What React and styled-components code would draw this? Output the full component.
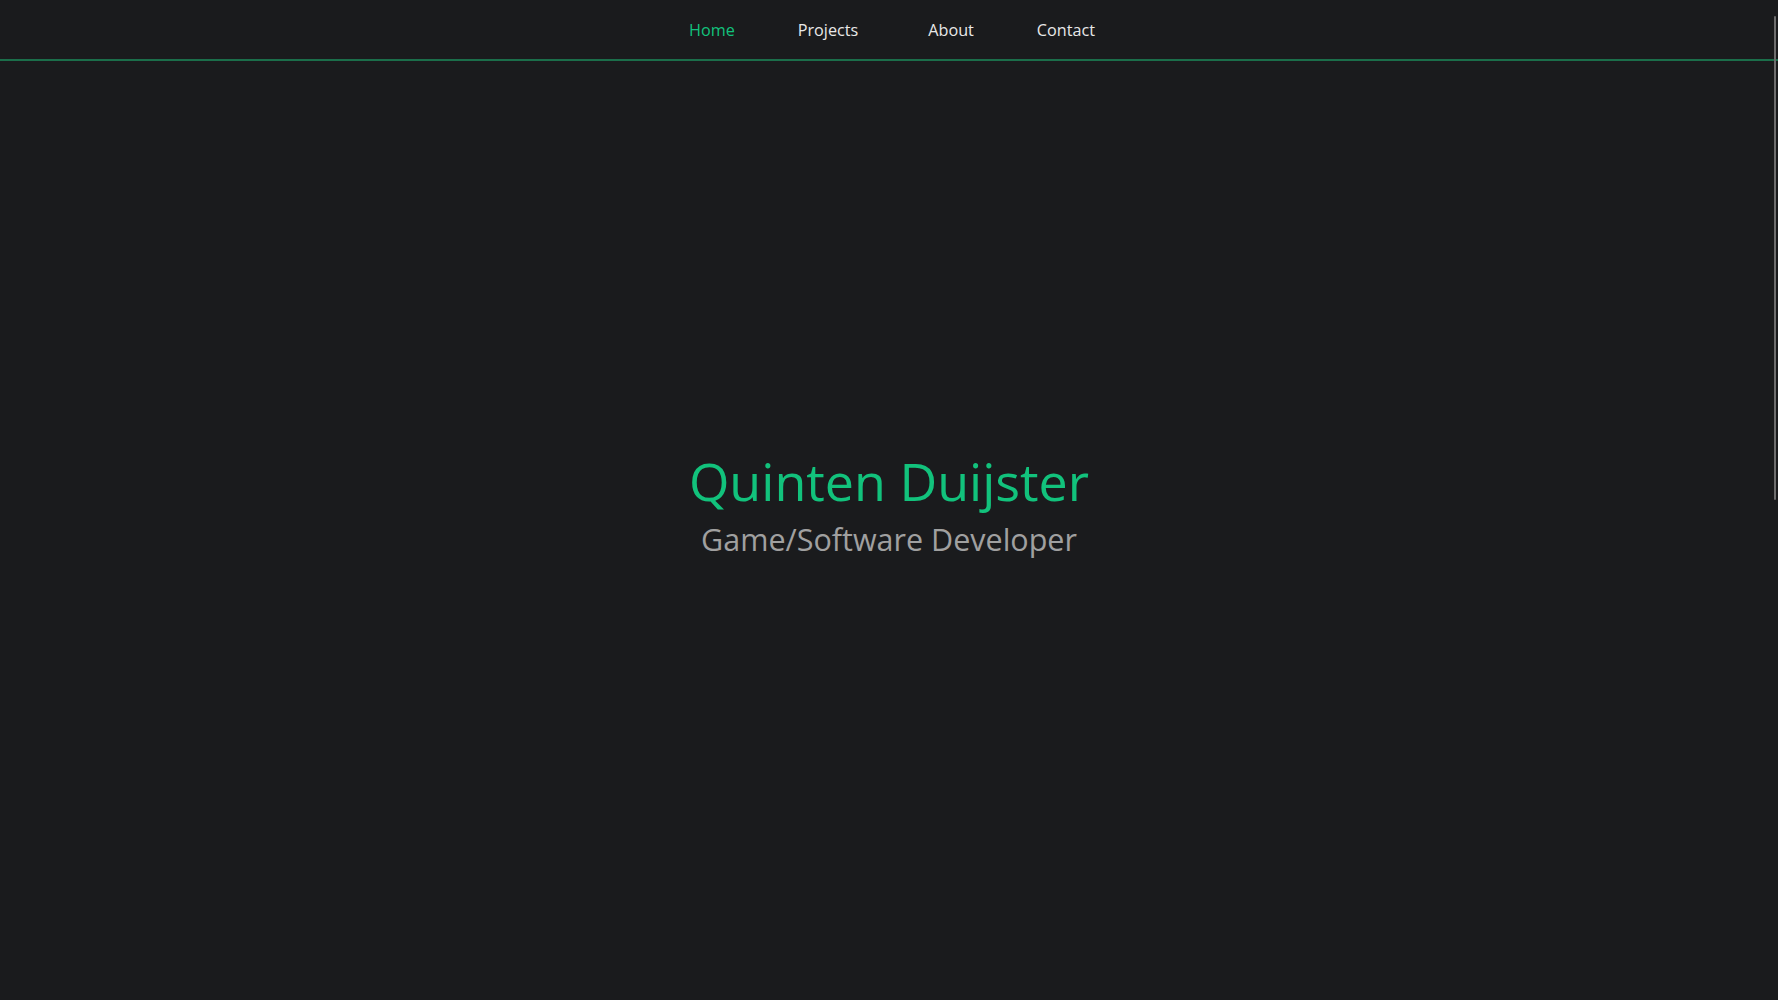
import React from 'react';
import styled, { createGlobalStyle } from 'styled-components';

const GlobalStyle = createGlobalStyle`
	html, body {
		margin: 0;
		padding: 0;
		background: #1a1b1d;
		overflow: hidden;
	}
	* {
		box-sizing: border-box;
	}
`;

const Page = styled.div`
	min-height: 100vh;
	background: #1a1b1d;
	font-family: 'Open Sans', 'Noto Sans', sans-serif;
`;

const NavBar = styled.nav`
	position: fixed;
	top: 0;
	left: 0;
	right: 0;
	height: 61px;
	background: #1a1b1d;
	border-bottom: 2px solid #1b6e4a;
	display: flex;
	justify-content: center;
	align-items: center;
	z-index: 2;
`;

const NavList = styled.ul`
	list-style: none;
	margin: 0;
	padding: 0 0 0 6px;
	display: flex;
	gap: 63px;
`;

const NavLink = styled.a`
	font-size: 16.2px;
	color: ${(props) => (props.active ? '#12c27c' : '#e8e8e8')};
	text-decoration: none;
	cursor: pointer;
	margin-right: ${(props) => props.extra || 0}px;
`;

const Hero = styled.section`
	height: 100vh;
	display: flex;
	flex-direction: column;
	justify-content: center;
	align-items: center;
	text-align: center;
	padding-top: 8px;
`;

const Name = styled.h1`
	margin: 0;
	font-size: 52px;
	font-weight: 400;
	line-height: 1.15;
	color: #12c27c;
`;

const Role = styled.h2`
	margin: 10px 0 0;
	font-size: 30.5px;
	font-weight: 400;
	line-height: 1.2;
	color: #a0a0a0;
`;

const ScrollThumb = styled.div`
	position: fixed;
	top: 16px;
	right: 2px;
	width: 2px;
	height: 484px;
	background: #6e6e6e;
	border-radius: 1px;
	z-index: 3;
`;

const links = [
	{ label: 'Home', active: true },
	{ label: 'Projects', extra: 7 },
	{ label: 'About' },
	{ label: 'Contact' },
];

const App = () => {
	return (
		<React.Fragment>
			<GlobalStyle />
			<Page>
				<NavBar>
					<NavList>
						{links.map((link) => (
							<li key={link.label}>
								<NavLink active={link.active} extra={link.extra}>
									{link.label}
								</NavLink>
							</li>
						))}
					</NavList>
				</NavBar>
				<Hero>
					<Name>Quinten Duijster</Name>
					<Role>Game/Software Developer</Role>
				</Hero>
				<ScrollThumb />
			</Page>
		</React.Fragment>
	);
};

export default App;
